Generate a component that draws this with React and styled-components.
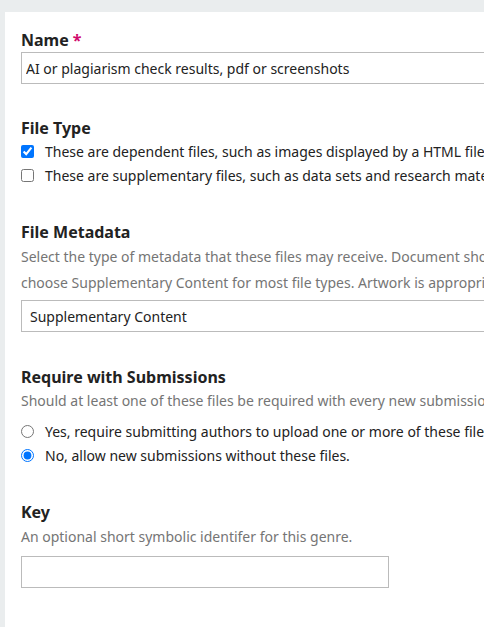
import React from "react";
import styled, { createGlobalStyle } from "styled-components";

const GlobalStyle = createGlobalStyle`
  html, body {
    margin: 0;
    padding: 0;
    background: #eaedee;
    overflow: hidden;
  }
  body {
    font-family: "Noto Sans", "Open Sans", sans-serif;
    color: #222;
  }
`;

const Page = styled.div`
  padding: 12px 0 0 5px;
  height: 627px;
  box-sizing: border-box;
`;

const Panel = styled.form`
  background: #fff;
  width: 900px;
  height: 100%;
  box-sizing: border-box;
  padding: 17px 16px 0 16px;
`;

const Section = styled.div`
  margin-bottom: ${(p) => p.$gap || 34}px;
`;

const Label = styled.div`
  font-size: 16px;
  font-weight: 700;
  line-height: 19px;
  padding-top: 2px;
  color: #222;
  margin-bottom: ${(p) => p.$after || 0}px;
`;

const Required = styled.span`
  color: #d00a6c;
  margin-left: 4px;
`;

const Description = styled.div`
  font-size: 14px;
  line-height: 26px;
  margin-top: ${(p) => p.$top || 0}px;
  color: #757575;
  white-space: nowrap;
`;

const TextInput = styled.input`
  display: block;
  box-sizing: border-box;
  width: ${(p) => p.$width || "700px"};
  height: 32px;
  margin: ${(p) => p.$top || 0}px 0 0 0;
  padding: 0 4px;
  border: 1px solid #bbb;
  border-radius: 0;
  font-family: inherit;
  font-size: 14px;
  color: #222;
  background: #fff;
  outline: none;
`;

const Select = styled.select`
  display: block;
  box-sizing: border-box;
  width: 700px;
  height: 32px;
  margin-top: ${(p) => p.$top || 0}px;
  padding: 0 8px;
  border: 1px solid #bbb;
  border-radius: 0;
  appearance: none;
  font-family: inherit;
  font-size: 14px;
  color: #222;
  background: #fff;
`;

const Options = styled.div`
  margin-top: ${(p) => p.$top || 0}px;
`;

const Option = styled.label`
  display: flex;
  align-items: center;
  gap: 11px;
  height: 24px;
  font-size: 14px;
  color: #222;
  white-space: nowrap;

  input {
    margin: 0;
    width: 13px;
    height: 13px;
    flex: none;
  }
`;

export default function App() {
  return (
    <>
      <GlobalStyle />
      <Page>
        <Panel onSubmit={(e) => e.preventDefault()}>
          <Section $gap={33}>
            <Label $after={2}>
              Name<Required>*</Required>
            </Label>
            <TextInput
              defaultValue="AI or plagiarism check results, pdf or screenshots"
            />
          </Section>

          <Section>
            <Label $after={1}>File Type</Label>
            <Options>
              <Option>
                <input type="checkbox" defaultChecked />
                These are dependent files, such as images displayed by a HTML file, and will not be displayed on their own.
              </Option>
              <Option>
                <input type="checkbox" />
                These are supplementary files, such as data sets and research materials, and will be displayed separately from the main publication files.
              </Option>
            </Options>
          </Section>

          <Section>
            <Label>File Metadata</Label>
            <Description $top={2}>
              Select the type of metadata that these files may receive. Document should be used for the primary publication files.
              <br />
              choose Supplementary Content for most file types. Artwork is appropriate for images, charts and graphs.
            </Description>
            <Select defaultValue="supplementary" $top={4}>
              <option value="document">Document</option>
              <option value="supplementary">Supplementary Content</option>
              <option value="artwork">Artwork</option>
            </Select>
          </Section>

          <Section>
            <Label>Require with Submissions</Label>
            <Description $top={1}>
              Should at least one of these files be required with every new submission?
            </Description>
            <Options $top={5}>
              <Option>
                <input type="radio" name="required" />
                Yes, require submitting authors to upload one or more of these files.
              </Option>
              <Option>
                <input type="radio" name="required" defaultChecked />
                No, allow new submissions without these files.
              </Option>
            </Options>
          </Section>

          <Section>
            <Label>Key</Label>
            <Description $top={2}>An optional short symbolic identifer for this genre.</Description>
            <TextInput $width="368px" $top={6} />
          </Section>
        </Panel>
      </Page>
    </>
  );
}
